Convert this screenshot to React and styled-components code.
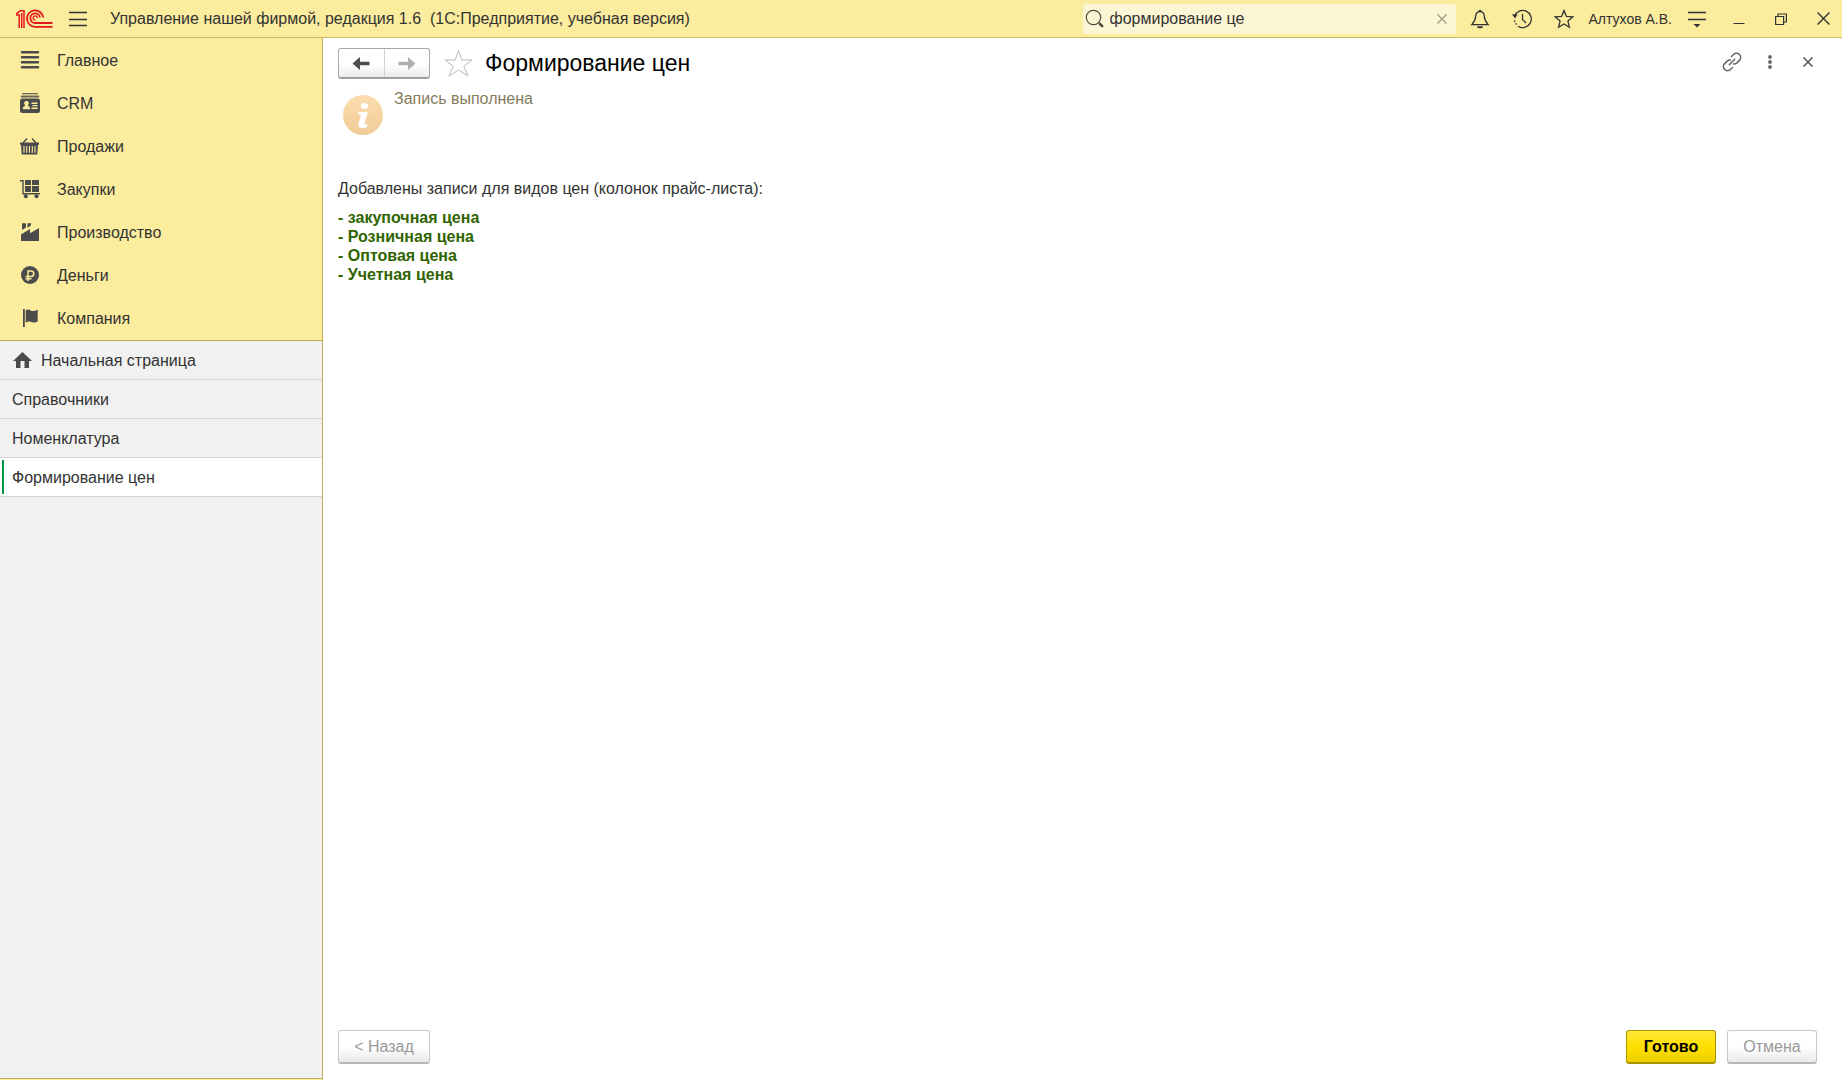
import React, { useState } from "react";
import styled, { createGlobalStyle, css } from "styled-components";

const GlobalStyle = createGlobalStyle`
  *, *::before, *::after { box-sizing: border-box; }
  html, body { margin: 0; }
  body, button, input {
    font-family: "Liberation Sans", Arial, sans-serif;
    font-size: 16px;
    color: #333;
  }
  svg { display: block; flex: none; }
`;

const Page = styled.div`
  display: flex;
  flex-direction: column;
  min-height: 100vh;
  background: #fff;
`;

const TopBar = styled.header`
  display: flex;
  align-items: center;
  gap: 4px;
  height: 38px;
  background: #fbec9e;
  border-bottom: 1px solid #c8b964;
`;

const PlainButton = styled.button`
  display: flex;
  align-items: center;
  justify-content: center;
  padding: 0;
  border: 0;
  background: none;
  cursor: pointer;
`;

const BarButton = styled(PlainButton)`
  width: 38px;
  height: 32px;
`;

const Logo = styled.div`
  padding: 0 2px 0 16px;
`;

const AppTitle = styled.div`
  flex: 1;
  min-width: 0;
  padding-left: 8px;
  overflow: hidden;
  white-space: pre;
`;

const Search = styled.label`
  display: flex;
  align-items: center;
  gap: 5px;
  width: 373px;
  height: 30px;
  margin-right: 1px;
  padding: 0 2px;
  border-radius: 2px;
  background: #fdf6d5;
`;

const SearchInput = styled.input`
  flex: 1;
  min-width: 0;
  padding: 0;
  border: 0;
  outline: 0;
  background: none;
`;

const ClearButton = styled(PlainButton)`
  width: 24px;
  height: 24px;
`;

const UserLink = styled.a`
  padding: 0 2px;
  font-size: 14px;
  color: #333;
  text-decoration: none;
  white-space: nowrap;
`;

const Body = styled.div`
  display: flex;
  flex: 1;
`;

const Sidebar = styled.div`
  display: flex;
  flex-direction: column;
  flex: none;
  width: 323px;
  background: #f1f1f1;
  border-right: 1px solid #bfad58;
  border-bottom: 1px solid #fbec9e;
`;

const Sections = styled.nav`
  padding-bottom: 1px;
  background: #fbec9e;
  border-bottom: 1px solid #bfad58;
`;

const SectionLink = styled.a`
  display: flex;
  align-items: center;
  gap: 17px;
  height: 43px;
  padding: 0 20px;
  color: #333;
  text-decoration: none;
`;

const LinkLabel = styled.span`
  padding-top: 2px;
`;

const OpenPages = styled.nav`
  flex: 1;
  border-bottom: 1px solid #bfad58;
`;

const PageLink = styled.a`
  display: flex;
  align-items: center;
  gap: 8px;
  height: 39px;
  padding: 0 12px;
  color: #333;
  text-decoration: none;
  border-bottom: 1px solid #d6d6d6;
  ${(p) =>
    p.$active &&
    css`
      background: linear-gradient(#009846, #009846) 2px 2px / 2px 34px no-repeat #fff;
    `}
`;

const Content = styled.main`
  display: flex;
  flex-direction: column;
  flex: 1;
  min-width: 0;
  padding: 10px 25px 16px 15px;
`;

const FormHeader = styled.div`
  display: flex;
  align-items: center;
  height: 31px;
`;

const History = styled.div`
  display: flex;
  width: 92px;
  height: 31px;
  border: 1px solid #a8a8a8;
  border-bottom: 2px solid #a0a0a0;
  border-radius: 3px;
  background: linear-gradient(#fff 50%, #ececec);
`;

const HistoryButton = styled(PlainButton)`
  flex: 1;
  & + & { border-left: 1px solid #d0d0d0; }
`;

const FavoriteButton = styled(PlainButton)`
  margin: 0 12px 0 13px;
`;

const Title = styled.h1`
  flex: 1;
  margin: 0;
  font-size: 23px;
  font-weight: 400;
  color: #000;
`;

const FormTools = styled.div`
  display: flex;
  align-self: flex-start;
  margin-right: -10px;
`;

const ToolButton = styled(PlainButton)`
  width: 38px;
  height: 28px;
`;

const Message = styled.div`
  display: flex;
  gap: 11px;
  padding: 11px 5px 0;
  color: #867c5c;
`;

const InfoIcon = styled.div`
  padding-top: 5px;
`;

const Intro = styled.p`
  margin: 44px 0 10px;
  line-height: 19px;
`;

const PriceList = styled.ul`
  margin: 0;
  padding: 0;
  list-style: none;
  font-weight: 700;
  line-height: 19px;
  color: #2f6400;
`;

const Footer = styled.footer`
  display: flex;
  gap: 11px;
  margin-top: auto;
`;

const ActionButton = styled.button`
  min-width: ${(p) => (p.$wide ? 92 : 90)}px;
  height: 34px;
  padding: 0;
  border: 1px solid #c8c8c8;
  border-bottom: 2px solid #b8b8b8;
  border-radius: 3px;
  background: linear-gradient(#fff 50%, #e9e9e9);
  color: #999;
  ${(p) =>
    p.$wide &&
    css`
      margin-right: auto;
    `}
  ${(p) =>
    p.$primary &&
    css`
      border-color: #a89600;
      background: linear-gradient(#ffe83c, #ffe000 50%, #edcf00);
      color: #000;
      font-weight: 700;
    `}
`;

const MenuButton = styled(PlainButton)`
  padding: 0 11px 0 9px;
`;

const DARK = "#4b4b4b";

const LogoIcon = () => (
  <svg width="38" height="20" viewBox="0 0 38 20" fill="none" stroke="#e1171e" strokeWidth="1.8">
    <path d="M0 6h3.200v13M.3 4.800L4.600 1.600M4 1.800h4v17.200M5.700 4v15" strokeWidth="1.500" />
    <path d="M27.300 8.500A8.200 8.200 0 1 0 19.300 17.800H36.500" />
    <path d="M23.900 8.500A4.800 4.800 0 1 0 19.300 14H36.500" />
    <path d="M21.300 9a2.100 2.100 0 1 0-2 2" strokeWidth="1.300" />
  </svg>
);

const MenuIcon = () => (
  <svg width="18" height="16" viewBox="0 0 18 16" fill="none" stroke="#333" strokeWidth="1.3">
    <path d="M0 1.500h18M0 8.500h18M0 14.500h18" />
  </svg>
);

const SearchIcon = () => (
  <svg width="20" height="20" viewBox="0 0 20 20" fill="none" stroke="#4d4a40">
    <circle cx="8.500" cy="8.500" r="7.200" strokeWidth="1.200" />
    <path d="M13.500 13.500l1.500 1.500" strokeWidth="1.200" />
    <path d="M15 15l2.200 2.200" strokeWidth="2.600" strokeLinecap="round" />
  </svg>
);

const CrossIcon = ({ size = 12, color = "#333", width = 1.3 }) => (
  <svg width={size} height={size} viewBox="0 0 12 12" fill="none" stroke={color} strokeWidth={width}>
    <path d="M.5.5l11 11M11.500.5l-11 11" />
  </svg>
);

const BellIcon = () => (
  <svg width="20" height="20" viewBox="0 0 20 20" fill="none" stroke="#333" strokeWidth="1.300">
    <path d="M10 2.700c-3 0-4.100 2-4.300 4.500-.3 4.200-1.500 5.900-3.900 8.400h16.400c-2.400-2.500-3.600-4.200-3.900-8.400-.2-2.500-1.300-4.500-4.300-4.500z" />
    <path d="M8.300 2.600a1.700 1.900 0 0 1 3.400 0zM7 17.200h6a3 2 0 0 1-6 0z" fill="#333" stroke="none" />
  </svg>
);

const HistoryIcon = () => (
  <svg width="20" height="20" viewBox="0 0 20 20" fill="none" stroke="#333" strokeWidth="1.300">
    <path d="M2.600 7A8.600 8.600 0 1 1 6 17.200M10.500 5v5.500l3.500 3.500" />
    <path d="M0 5.200l5.600.4-2.600 4z" fill="#333" stroke="none" />
    <path d="M2.300 11.500l.6 1.500M3.600 14.300l1 1.200" />
  </svg>
);

const STAR = "M10 1.500l2.400 5.900 6.300.5-4.800 4.100 1.500 6.200L10 14.900l-5.400 3.300 1.500-6.200L1.300 7.900l6.300-.5z";

const StarIcon = () => (
  <svg width="20" height="20" viewBox="0 0 20 20" fill="none" stroke="#333" strokeWidth="1.300">
    <path d={STAR} />
  </svg>
);

const FavoriteIcon = () => (
  <svg width="30" height="30" viewBox="0 0 30 30" fill="#fff" stroke="#b4bac0" strokeWidth="1">
    <path d="M15.500 1.500l3.300 9.500H29l-8.200 6.300 4.200 9.700-9.500-6-9.500 6 4.200-9.700L2 11h10.200z" />
  </svg>
);

const OptionsIcon = () => (
  <svg width="18" height="18" viewBox="0 0 18 18" fill="none" stroke="#333" strokeWidth="1.300">
    <path d="M0 2.500h18M0 9.500h18" />
    <path d="M5.500 14h7L9 17.500z" fill="#333" stroke="none" />
  </svg>
);

const MinimizeIcon = () => (
  <svg width="12" height="12" viewBox="0 0 12 12" stroke="#333">
    <path d="M.5 10.500h11" />
  </svg>
);

const RestoreIcon = () => (
  <svg width="12" height="12" viewBox="0 0 12 12" fill="none" stroke="#333" strokeWidth="1.200">
    <path d="M.6 3.500h8v8h-8zM3 3.500V1h8.400v8H8.600" />
  </svg>
);

const LinkIcon = () => (
  <svg width="20" height="20" viewBox="0 0 20 20" fill="none" stroke="#666" strokeWidth="1.500" strokeLinecap="round">
    <path d="M9.500 4.500l2-2a4.100 4.100 0 0 1 5.900 0 4.100 4.100 0 0 1 0 5.900l-2.500 2.500c-1 .9-2.200 1.200-3.400 1" />
    <path d="M10.500 15.500l-2 2a4.100 4.100 0 0 1-5.900 0 4.100 4.100 0 0 1 0-5.900l2.500-2.500c1-.9 2.200-1.200 3.400-1M7.300 12.700l5.400-5.400" />
  </svg>
);

const DotsIcon = () => (
  <svg width="4" height="14" viewBox="0 0 4 14" fill="#666">
    <circle cx="2" cy="2" r="1.900" />
    <circle cx="2" cy="7" r="1.900" />
    <circle cx="2" cy="12" r="1.900" />
  </svg>
);

const ArrowIcon = ({ color, forward }) => (
  <svg width="18" height="14" viewBox="0 0 18 14" fill={color}>
    <path d={forward ? "M17.500 7.500l-7.500-6.500v4.700H.5v3.600H10v4.700z" : "M.5 7.500l7.500-6.500v4.700h9.500v3.600H8v4.700z"} />
  </svg>
);

const InfoDrawing = () => (
  <svg width="40" height="40" viewBox="0 0 40 40">
    <defs>
      <linearGradient id="info-fill" x1="0" y1="0" x2="0" y2="1">
        <stop offset="0" stopColor="#fcdcae" />
        <stop offset="1" stopColor="#f1cc98" />
      </linearGradient>
    </defs>
    <circle cx="20" cy="20" r="20" fill="url(#info-fill)" />
    <ellipse cx="21.500" cy="11" rx="3.700" ry="3" fill="#fff" />
    <path d="M16 17h8.700l-3.300 12.300c.9.500 2.200.3 3.400.2-.3 2-1.400 3.500-4.600 3.500-3.500 0-5.500-1.200-4.700-4.300l2.400-8.700c-.8-.5-1.500-.4-2.800-.3.200-1 .4-1.900.9-2.700z" fill="#fff" />
  </svg>
);

const HomeIcon = () => (
  <svg width="21" height="18" viewBox="0 0 21 18" fill={DARK}>
    <path d="M10.500 1l9.500 9h-3v7h-4.500v-7h-4v7H4v-7H1z" />
  </svg>
);

const SectionIcon = ({ children }) => (
  <svg width="20" height="21" viewBox="0 -1 20 21" fill={DARK}>
    {children}
  </svg>
);

const SECTIONS = [
  {
    name: "Главное",
    icon: (
      <path d="M2 1h16a1 1 0 0 1 0 2.500H2A1 1 0 0 1 2 1zM2 6h16a1 1 0 0 1 0 2.500H2A1 1 0 0 1 2 6zM2 11h16a1 1 0 0 1 0 2.500H2A1 1 0 0 1 2 11zM2 16h16a1 1 0 0 1 0 2.500H2A1 1 0 0 1 2 16z" />
    ),
  },
  {
    name: "CRM",
    icon: (
      <>
        <path d="M2.500 0h15l.8 1.300H1.700zM1.300 2.400h17.400l.8 2.200H.5z" opacity=".85" />
        <rect y="5.500" width="20" height="14.500" rx="2.500" />
        <path d="M6.500 8a2.200 2.200 0 0 1 1.400 4c.2 1.400 2.300 1.500 2.300 4.200H2.800c0-2.700 2.100-2.800 2.300-4.200A2.200 2.200 0 0 1 6.500 8zM11.500 9.500h6V11h-6zM12.500 12h5v1.300h-5zM11.500 14.600h6V16h-6z" fill="#fbec9e" />
      </>
    ),
  },
  {
    name: "Продажи",
    icon: (
      <g transform="translate(0 1)">
        <path d="M0 5.500h19v2.300h-1l-.7 9.700H1.700L1 7.800H0z" />
        <path d="M3 6L7 1.500M16 6L12 1.500" stroke={DARK} strokeWidth="1.400" />
        <path d="M4 9v6.800M6.700 9v6.800M9.500 9v6.800M12.300 9v6.800M15 9v6.800" stroke="#fbec9e" strokeWidth="1.100" />
      </g>
    ),
  },
  {
    name: "Закупки",
    icon: (
      <g transform="translate(0 1)">
        <path d="M5 0h6v5H5zM12 0h7v5h-7zM5 6h6v6H5zM12 6h7v6h-7z" />
        <path d="M0 .8h3v13h17" fill="none" stroke={DARK} strokeWidth="1.400" />
        <circle cx="5.800" cy="16.200" r="2" />
        <circle cx="16.500" cy="16.200" r="2" />
      </g>
    ),
  },
  {
    name: "Производство",
    icon: (
      <path
        transform="translate(0 1)"
        d="M2 .2h4v4.300L2 7zM7.500.2h3.700L10.500 3 7.500 4.700zM1 11.500L10 6v4.300L19 5v13H1z"
      />
    ),
  },
  {
    name: "Деньги",
    icon: (
      <g transform="translate(0 1)">
        <circle cx="10" cy="9" r="9" />
        <path d="M8 15V5h3a2.700 2.700 0 0 1 0 5.600H5.500M5.500 12.700h6" fill="none" stroke="#fbec9e" strokeWidth="1.500" />
      </g>
    ),
  },
  {
    name: "Компания",
    icon: (
      <path
        transform="translate(0 1)"
        d="M3 0h1.800v18H3zM5.700 1.500c2-1.500 3.300-1 5 0s4 .800 7-1v12c-2.500 1.500-4.500 1.200-6.300.4s-3.400-.6-5.700.6z"
      />
    ),
  },
];

const PAGES = ["Начальная страница", "Справочники", "Номенклатура", "Формирование цен"];
const PRICES = ["закупочная цена", "Розничная цена", "Оптовая цена", "Учетная цена"];

export default function App() {
  const [query, setQuery] = useState("формирование це");

  return (
    <Page>
      <GlobalStyle />
      <TopBar>
        <Logo><LogoIcon /></Logo>
        <MenuButton aria-label="Меню"><MenuIcon /></MenuButton>
        <AppTitle>{"Управление нашей фирмой, редакция 1.6  (1С:Предприятие, учебная версия)"}</AppTitle>
        <Search>
          <SearchIcon />
          <SearchInput aria-label="Поиск" value={query} onChange={(e) => setQuery(e.target.value)} />
          <ClearButton aria-label="Очистить" onClick={() => setQuery("")}>
            <CrossIcon size={10} color="#a09a85" width={1.6} />
          </ClearButton>
        </Search>
        <BarButton aria-label="Уведомления"><BellIcon /></BarButton>
        <BarButton aria-label="История"><HistoryIcon /></BarButton>
        <BarButton aria-label="Избранное"><StarIcon /></BarButton>
        <UserLink href="#user">Алтухов А.В.</UserLink>
        <BarButton aria-label="Настройки"><OptionsIcon /></BarButton>
        <BarButton aria-label="Свернуть"><MinimizeIcon /></BarButton>
        <BarButton aria-label="Восстановить"><RestoreIcon /></BarButton>
        <BarButton aria-label="Закрыть"><CrossIcon size={13} /></BarButton>
      </TopBar>
      <Body>
        <Sidebar>
          <Sections>
            {SECTIONS.map((s) => (
              <SectionLink key={s.name} href="#section">
                <SectionIcon>{s.icon}</SectionIcon>
                <LinkLabel>{s.name}</LinkLabel>
              </SectionLink>
            ))}
          </Sections>
          <OpenPages>
            {PAGES.map((name, i) => (
              <PageLink key={name} href="#page" $active={i === PAGES.length - 1}>
                {i === 0 && <HomeIcon />}
                <LinkLabel>{name}</LinkLabel>
              </PageLink>
            ))}
          </OpenPages>
        </Sidebar>
        <Content>
          <FormHeader>
            <History>
              <HistoryButton aria-label="Назад"><ArrowIcon color="#4d4d4d" /></HistoryButton>
              <HistoryButton aria-label="Вперед"><ArrowIcon color="#b0b0b0" forward /></HistoryButton>
            </History>
            <FavoriteButton aria-label="В избранное"><FavoriteIcon /></FavoriteButton>
            <Title>Формирование цен</Title>
            <FormTools>
              <ToolButton aria-label="Ссылка"><LinkIcon /></ToolButton>
              <ToolButton aria-label="Еще"><DotsIcon /></ToolButton>
              <ToolButton aria-label="Закрыть форму"><CrossIcon size={10} color="#555" width={1.8} /></ToolButton>
            </FormTools>
          </FormHeader>
          <Message>
            <InfoIcon><InfoDrawing /></InfoIcon>
            Запись выполнена
          </Message>
          <Intro>Добавлены записи для видов цен (колонок прайс-листа):</Intro>
          <PriceList>
            {PRICES.map((p) => (
              <li key={p}>- {p}</li>
            ))}
          </PriceList>
          <Footer>
            <ActionButton $wide>&lt; Назад</ActionButton>
            <ActionButton $primary>Готово</ActionButton>
            <ActionButton>Отмена</ActionButton>
          </Footer>
        </Content>
      </Body>
    </Page>
  );
}
